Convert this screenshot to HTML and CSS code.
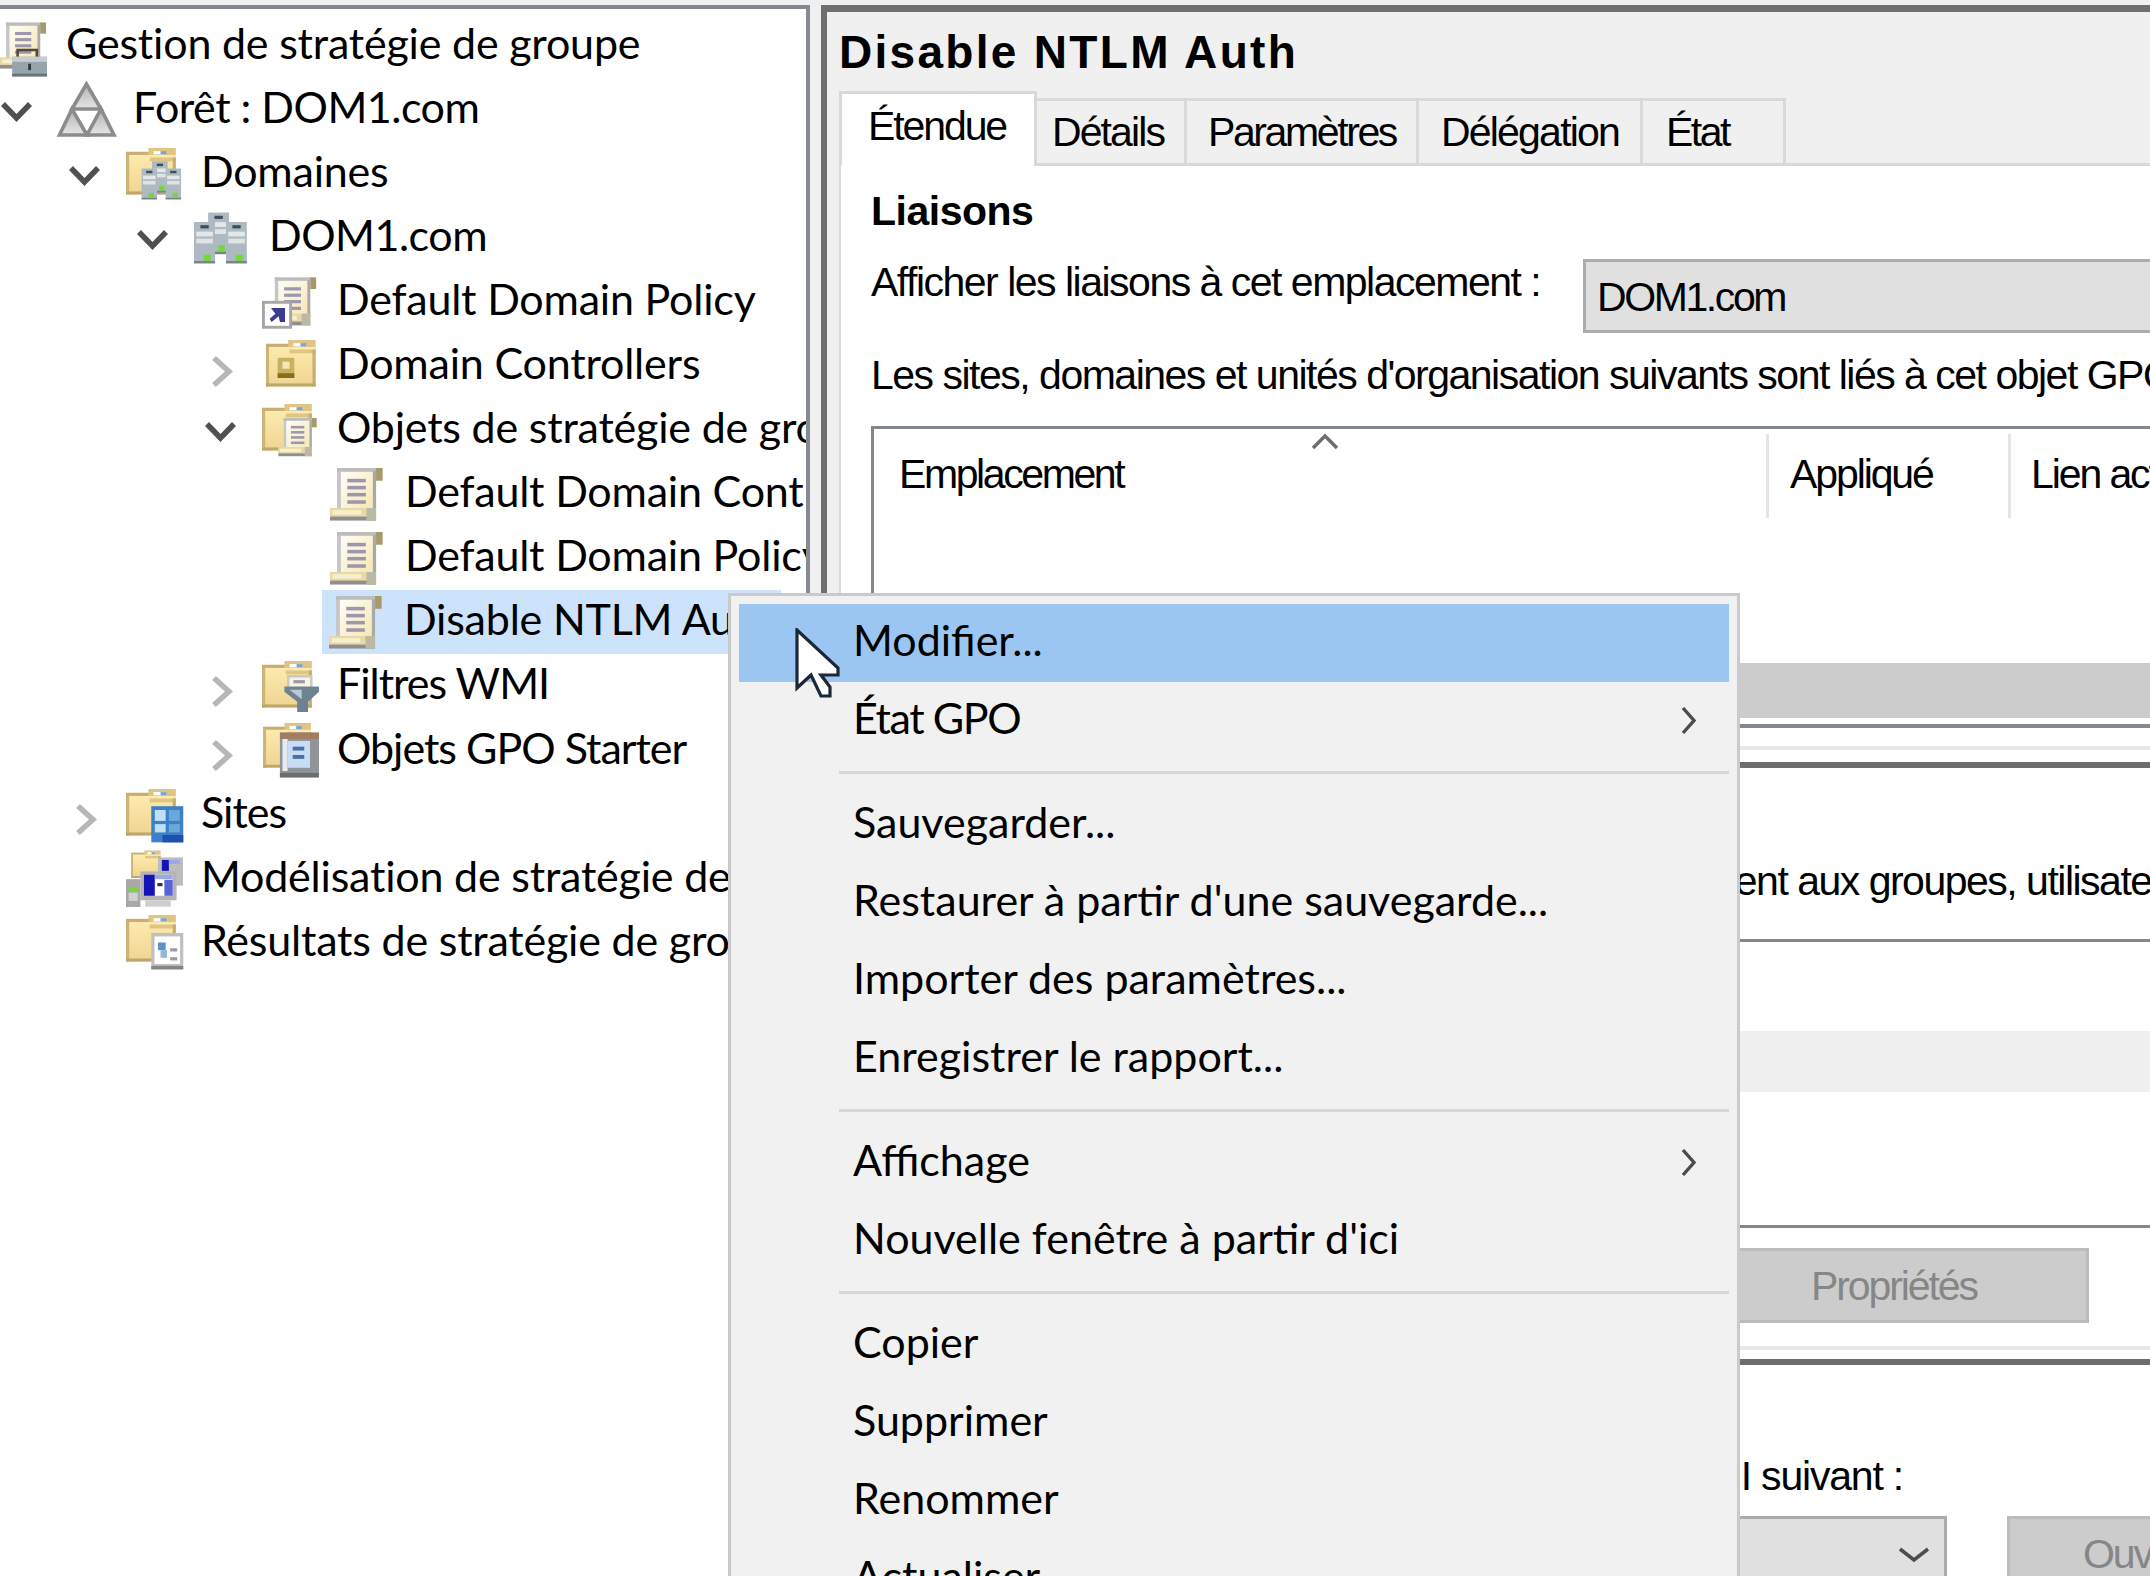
FILE: index.html
```html
<!DOCTYPE html>
<html lang="fr">
<head>
<meta charset="utf-8">
<title>Gestion de stratégie de groupe</title>
<link rel="stylesheet" href="styles.css">
</head>
<body>
<svg class="defs" width="0" height="0" aria-hidden="true">
  <defs>
    <linearGradient id="fold" x1="0" y1="0" x2="0" y2="1"><stop offset="0" stop-color="#fdeaae"/><stop offset="1" stop-color="#efd491"/></linearGradient>
    <linearGradient id="parch" x1="0" y1="0" x2="1" y2="1"><stop offset="0" stop-color="#ffffff"/><stop offset="1" stop-color="#f6e5ae"/></linearGradient>
    <linearGradient id="tri" x1="0" y1="0" x2="0" y2="1"><stop offset="0" stop-color="#b0b0b0"/><stop offset="1" stop-color="#e6e6e6"/></linearGradient>
    <symbol id="folder" viewBox="0 0 15.6 14.6">
      <rect x="0" y="1.2" width="8" height="2" fill="#c9ae6f"/>
      <rect x="7" y="0" width="8.6" height="4.2" fill="#dfc583"/>
      <rect x="0" y="2.2" width="15.6" height="12.4" fill="url(#fold)"/>
      <rect x="7.4" y="3" width="8.2" height="1.2" fill="#dfc583"/>
      <rect x="8.6" y="1" width="3.4" height="1" fill="#ffffff"/>
      <rect x="10.8" y="1" width="1.8" height="1" fill="#74a5df"/>
      <rect x="0" y="2.2" width="1" height="12.4" fill="#cdb478"/>
      <rect x="14.6" y="3" width="1" height="11.6" fill="#c6ad70"/>
      <rect x="0" y="13.6" width="15.6" height="1" fill="#bda76c"/>
    </symbol>
    <symbol id="scroll" viewBox="0 0 16.5 16.5">
      <rect x="2.2" y="0" width="12.2" height="14" fill="url(#parch)"/>
      <rect x="2.2" y="0" width="1.2" height="13" fill="#c6c6c6"/>
      <rect x="2.2" y="0" width="13" height="1.2" fill="#bdbdbd"/>
      <rect x="13.4" y="1" width="1" height="12.5" fill="#a9a9a9"/>
      <rect x="14.4" y="0" width="2.1" height="4" fill="#a69a6b"/>
      <rect x="5.4" y="3.4" width="5.8" height="1.1" fill="#9d97ad"/>
      <rect x="5.4" y="5.6" width="5.8" height="1.1" fill="#9d97ad"/>
      <rect x="5.4" y="7.8" width="5.8" height="1.1" fill="#9d97ad"/>
      <rect x="5.4" y="10.1" width="5.8" height="1.1" fill="#9d97ad"/>
      <rect x="0" y="12.5" width="14.4" height="3" fill="#e7d9a4"/>
      <rect x=".8" y="13.2" width="9" height="1.4" fill="#f6efd0"/>
      <rect x="0" y="15.2" width="14.4" height="1.3" fill="#8f8f8f"/>
      <rect x="11.4" y="12.5" width="3" height="4" fill="#b9b9a5"/>
    </symbol>
    <symbol id="tower" viewBox="0 0 6.6 13">
      <rect width="6.6" height="13" fill="#aeb9c1"/>
      <rect x="2" y="1" width="2.6" height="1" fill="#3b4e5b"/>
      <rect x=".7" y="3" width="5.2" height="1.5" fill="#e4e8eb"/>
      <rect x=".7" y="5.2" width="5.2" height="1.5" fill="#dfe4e7"/>
      <rect y="12.2" width="6.6" height=".8" fill="#78848d"/>
      <rect x="3" y="10.2" width="2.2" height="2" fill="#74d83c"/>
    </symbol>
    <symbol id="servers" viewBox="0 0 16.5 16.5">
      <use href="#tower" x="4.4" y="0" width="6.6" height="14"/>
      <use href="#tower" x="0" y="3.4" width="6.6" height="13.1"/>
      <use href="#tower" x="10" y="3.4" width="6.6" height="13.1"/>
    </symbol>
    <symbol id="chev-down" viewBox="0 0 33 22"><polyline points="3,3 16.5,17 30,3" fill="none" stroke="#505050" stroke-width="5.5"/></symbol>
    <symbol id="chev-right" viewBox="0 0 22 33"><polyline points="3,3 18,16.5 3,30" fill="none" stroke="#b6b6b6" stroke-width="5.5"/></symbol>
    <symbol id="sub" viewBox="0 0 16 29"><polyline points="2,2 13,14.5 2,27" fill="none" stroke="#4b4b4b" stroke-width="3.4"/></symbol>
  </defs>
</svg>

<div class="screen">
  <div class="tree">
    <div class="row root">
      <svg class="ico" viewBox="0 0 18 17"><use href="#scroll" x="0" y=".6" width="14.4" height="16"/><rect x="5.5" y="10" width="6" height="3" fill="none" stroke="#4f4a3a" stroke-width=".8"/><rect x="3.8" y="12.1" width="10.9" height="6.1" fill="#98a4ab"/><rect x="3.8" y="12.1" width="10.9" height="1.6" fill="#c6cdd1"/><rect x="3.8" y="17.4" width="10.9" height=".9" fill="#69747b"/><rect x="8.8" y="14.3" width=".9" height="2" fill="#2f3a40"/></svg>
      <span class="label">Gestion de stratégie de groupe</span>
    </div>
    <div class="row">
      <svg class="chev down"><use href="#chev-down" width="33" height="22"/></svg>
      <svg class="ico" viewBox="0 0 57.6 54.4"><g fill="url(#tri)" stroke="#8c8c8c" stroke-width="3.6"><polygon points="28.5,2 14,27 43,27"/><polygon points="14,27 1.5,53 29,53"/><polygon points="43,27 29,53 56,53"/></g></svg>
      <span class="label tight">Forêt : DOM1.com</span>
    </div>
    <div class="row d1">
      <svg class="chev down"><use href="#chev-down" width="33" height="22"/></svg>
      <svg class="ico" viewBox="0 0 18 17"><use href="#folder" y=".6" width="15.6" height="14.6"/><use href="#servers" x="4.4" y="4.4" width="13.2" height="12.4"/></svg>
      <span class="label">Domaines</span>
    </div>
    <div class="row d2">
      <svg class="chev down"><use href="#chev-down" width="33" height="22"/></svg>
      <svg class="ico" viewBox="0 0 18 17"><use href="#servers" y=".3" width="16.5" height="16.5"/></svg>
      <span class="label tight">DOM1.com</span>
    </div>
    <div class="row d3">
      <span class="chev"></span>
      <svg class="ico" viewBox="0 0 18 17"><use href="#scroll" x="2" y=".3" width="15" height="16.5"/><rect x="0" y="8.4" width="9.4" height="8.7" fill="#a6a6a6"/><rect x=".9" y="9.3" width="7.6" height="6.9" fill="#ffffff"/><polygon points="2.8,10.6 7.2,10.6 7.2,15 5.6,15 5.2,13.2 3,15 2.4,14 4.2,12.4" fill="#3b3b8f"/></svg>
      <span class="label">Default Domain Policy</span>
    </div>
    <div class="row d3">
      <svg class="chev right"><use href="#chev-right" width="22" height="33"/></svg>
      <svg class="ico" viewBox="0 0 18 17"><use href="#folder" x="1.2" y=".6" width="15.6" height="14.6"/><rect x="4.9" y="6.2" width="5.2" height="6.3" fill="#c8b25f"/><rect x="6.4" y="7.4" width="2.2" height="2.2" fill="#f2e7b5"/><rect x="4.9" y="11" width="5.2" height="1.5" fill="#8a6d1f"/></svg>
      <span class="label">Domain Controllers</span>
    </div>
    <div class="row d3">
      <svg class="chev down"><use href="#chev-down" width="33" height="22"/></svg>
      <svg class="ico" viewBox="0 0 18 17"><use href="#folder" y=".6" width="15.6" height="14.6"/><use href="#scroll" x="4.6" y="5" width="13" height="12"/></svg>
      <span class="label">Objets de stratégie de groupe</span>
    </div>
    <div class="row d4">
      <span class="chev"></span>
      <svg class="ico" viewBox="0 0 18 17"><use href="#scroll" y=".3" width="16.5" height="16.5"/></svg>
      <span class="label">Default Domain Controllers Policy</span>
    </div>
    <div class="row d4">
      <span class="chev"></span>
      <svg class="ico" viewBox="0 0 18 17"><use href="#scroll" y=".3" width="16.5" height="16.5"/></svg>
      <span class="label">Default Domain Policy</span>
    </div>
    <div class="row d4 has-selection">
      <span class="chev short"></span>
      <div class="selected">
        <svg class="ico" viewBox="0 0 18 17"><use href="#scroll" y=".3" width="16.5" height="16.5"/></svg>
        <span class="label">Disable NTLM Auth</span>
      </div>
    </div>
    <div class="row d3">
      <svg class="chev right"><use href="#chev-right" width="22" height="33"/></svg>
      <svg class="ico" viewBox="0 0 18 17"><use href="#folder" y=".6" width="15.6" height="14.6"/><rect x="7.8" y="5" width="8" height="4" fill="#c9c9c9"/><rect x="8.6" y="5.8" width="6.4" height="3" fill="#f8f4e4"/><rect x="9.8" y="6.6" width="3.6" height="1" fill="#9d97ad"/><polygon points="7,8.6 17.8,8.6 17.8,10.2 14.4,13.4 14.4,16.6 11,16.6 11,13.4 7,10.2" fill="#6e8391"/><polygon points="8.6,9.6 12.4,9.6 12.4,12.6" fill="#b9cbd8"/></svg>
      <span class="label tighter">Filtres WMI</span>
    </div>
    <div class="row d3">
      <svg class="chev right"><use href="#chev-right" width="22" height="33"/></svg>
      <svg class="ico" viewBox="0 0 18 17"><use href="#folder" y="0" width="15.6" height="14"/><rect x="5.6" y="3" width="12.2" height="14" fill="#8f9499"/><rect x="5.6" y="3" width="12.2" height="2" fill="#a37c62"/><rect x="6.4" y="5" width="1.6" height="10" fill="#e6ecf2"/><rect x="8" y="5.6" width="7" height="8.4" fill="#c8dcf5"/><rect x="9.6" y="7.4" width="3.6" height="1.2" fill="#4a6ea5"/><rect x="9.6" y="10" width="3.6" height="1.2" fill="#4a6ea5"/><rect x="5.6" y="15.6" width="12.2" height="1.4" fill="#6d6d6d"/></svg>
      <span class="label tighter">Objets GPO Starter</span>
    </div>
    <div class="row d1">
      <svg class="chev right"><use href="#chev-right" width="22" height="33"/></svg>
      <svg class="ico" viewBox="0 0 18 17"><use href="#folder" y=".6" width="15.6" height="14.6"/><rect x="7.9" y="6" width="10" height="11.3" fill="#3d7fc9"/><rect x="9" y="7.2" width="3.4" height="3.4" fill="#bfe0f2"/><rect x="13.4" y="7.2" width="3.4" height="3.4" fill="#6aa8d6"/><rect x="9" y="11.6" width="3.4" height="2.6" fill="#bfe0f2"/><rect x="13.4" y="11.6" width="3.4" height="2.6" fill="#6aa8d6"/><rect x="11.4" y="15" width="6.5" height="2.3" fill="#1f50b0"/></svg>
      <span class="label tighter">Sites</span>
    </div>
    <div class="row d1">
      <span class="chev"></span>
      <svg class="ico" viewBox="0 0 18 17"><use href="#folder" x="1" y="-.2" width="10.4" height="8.6"/><rect x="10" y="2" width="7.8" height="8.8" fill="#bdbdbd"/><rect x="11.2" y="2.8" width="2.2" height="3.4" fill="#1414b4"/><rect x="13.4" y="2.8" width="3.4" height="1.2" fill="#9aa6e8"/><rect x="4.5" y="6.4" width="11.3" height="9" fill="#b4b4b4"/><rect x="5.6" y="7.4" width="9" height="6.6" fill="#ffffff"/><rect x="5.6" y="7.4" width="3.4" height="6.6" fill="#1414b4"/><rect x="9" y="7.4" width="5.6" height="1.4" fill="#9aa6e8"/><rect x="12" y="9" width="2.6" height="5" fill="#5a62d8"/><rect x="9.8" y="10" width="1.6" height="1" fill="#333344"/><rect x="0" y="8.8" width="4.5" height="8.7" fill="#a8a8a8"/><rect x=".8" y="11.4" width="2.9" height="1.2" fill="#74d83c"/><rect x=".8" y="13" width="2.9" height="2.6" fill="#d0d0d0"/><rect x="6" y="15.4" width="8" height="2" fill="#cfcfcf"/></svg>
      <span class="label">Modélisation de stratégie de groupe</span>
    </div>
    <div class="row d1">
      <span class="chev"></span>
      <svg class="ico" viewBox="0 0 18 17"><use href="#folder" y="0" width="15.6" height="14.6"/><rect x="7.9" y="5.6" width="10" height="11.4" fill="#c0c0c0"/><rect x="8.9" y="6.7" width="8" height="8.6" fill="#ffffff"/><rect x="10" y="8.6" width="2.4" height="2.4" fill="#5d93c4"/><rect x="10.8" y="11" width="2" height="2.4" fill="#8fb8dc"/><rect x="13.8" y="10.4" width="2.2" height="1" fill="#9d97ad"/><rect x="13.8" y="13.2" width="2.2" height="1" fill="#9d97ad"/><rect x="7.9" y="15.9" width="10" height="1.1" fill="#858585"/></svg>
      <span class="label">Résultats de stratégie de groupe</span>
    </div>
  </div>

  <div class="panel">
    <div class="title">Disable NTLM Auth</div>
    <div class="tabs">
      <div class="tab active">Étendue</div>
      <div class="tab t-details">Détails</div>
      <div class="tab t-params">Paramètres</div>
      <div class="tab t-deleg">Délégation</div>
      <div class="tab t-etat">État</div>
      <div class="tab-rest"></div>
    </div>
    <div class="content">
      <div class="heading">Liaisons</div>
      <div class="show-row">
        <span class="show-label">Afficher les liaisons à cet emplacement :</span>
        <div class="combo top-combo">DOM1.com</div>
      </div>
      <div class="line links-intro">Les sites, domaines et unités d'organisation suivants sont liés à cet objet GPO :</div>
      <div class="list links">
        <div class="list-head">
          <div class="col col-loc">Emplacement<svg class="caret" viewBox="0 0 30 17"><polyline points="3,15 15,3 27,15" fill="none" stroke="#6e6e6e" stroke-width="3.5"/></svg></div>
          <div class="col col-app">Appliqué</div>
          <div class="col col-lien">Lien activé</div>
        </div>
        <div class="list-fill"></div>
        <div class="scrollbar"></div>
      </div>
      <div class="rule-light after-links"></div>
      <div class="rule-dark first-split"></div>
      <div class="line filter-label">uniquement aux groupes, utilisateurs et ordinateurs suivants :</div>
      <div class="list filter">
        <div class="band"></div>
      </div>
      <div class="btn props">Propriétés</div>
      <div class="rule-light after-props"></div>
      <div class="rule-dark second-split"></div>
      <div class="line wmi-label">Cet objet GPO est lié au filtre WMI suivant :</div>
      <div class="wmi-row">
        <div class="combo wmi-combo"><svg class="combo-chev" viewBox="0 0 32 20"><polyline points="2,4 16,15 30,4" fill="none" stroke="#4d4d4d" stroke-width="3.5"/></svg></div>
        <div class="btn open">Ouvrir</div>
      </div>
    </div>
  </div>

  <div class="menu">
    <div class="item hot">Modifier...</div>
    <div class="item"><span class="tight-item">État GPO</span><svg class="sub"><use href="#sub" width="16" height="29"/></svg></div>
    <div class="sep"></div>
    <div class="item">Sauvegarder...</div>
    <div class="item">Restaurer à partir d'une sauvegarde...</div>
    <div class="item">Importer des paramètres...</div>
    <div class="item">Enregistrer le rapport...</div>
    <div class="sep"></div>
    <div class="item">Affichage<svg class="sub"><use href="#sub" width="16" height="29"/></svg></div>
    <div class="item">Nouvelle fenêtre à partir d'ici</div>
    <div class="sep"></div>
    <div class="item">Copier</div>
    <div class="item">Supprimer</div>
    <div class="item">Renommer</div>
    <div class="item">Actualiser</div>
  </div>

  <svg class="cursor" viewBox="0 0 46 72"><polygon points="2,2 2,60 16,47 26,68 35,68 35,59 26,47 43,47 43,40" fill="#ffffff" stroke="#1c2836" stroke-width="3.2" stroke-linejoin="miter"/></svg>
</div>
</body>
</html>
```

FILE: styles.css
```css
* { box-sizing: border-box; }
html, body { margin: 0; padding: 0; }
body { background: #f0f0f0; color: #000; }
.defs { position: absolute; }

.screen {
  width: 2150px;
  height: 1576px;
  overflow: hidden;
  position: relative;
  display: flex;
  padding-top: 5px;
  background: #f0f0f0;
}

/* Left tree */
.tree {
  width: 810px;
  height: 1571px;
  flex: none;
  overflow: hidden;
  background: #fff;
  border-top: 4px solid #84888f;
  border-right: 4px solid #858a92;
  padding-top: 4px;
  font-family: Lato, "Noto Sans", sans-serif;
  font-size: 43px;
  letter-spacing: -.2px;
}
.row { display: flex; align-items: center; height: 64.1px; white-space: nowrap; }
.d1 { padding-left: 68px; }
.d2 { padding-left: 136px; }
.d3 { padding-left: 204px; }
.d4 { padding-left: 272px; }
.chev { flex: none; width: 58px; height: 33px; }
.chev.down { height: 22px; margin-top: 5px; overflow: visible; }
.chev.right { margin-top: 11px; overflow: visible; transform: translateX(7px); }
.chev.short { width: 50px; }
.ico { flex: none; width: 57.6px; height: 54.4px; margin-right: 17.4px; overflow: visible; }
.root .ico { margin-right: 8.4px; }
.label { padding-bottom: 5px; line-height: 60px; }
.tight { letter-spacing: -.5px; }
.tighter { letter-spacing: -1px; }
.selected {
  display: flex;
  align-items: center;
  flex: none;
  width: 459px;
  height: 64px;
  padding-left: 7px;
  background: #cde3fb;
}

/* Right details panel */
.panel {
  flex: none;
  width: 1329px;
  margin-left: 11px;
  background: #f0f0f0;
  border-top: 7px solid #6f6f6f;
  border-left: 6px solid #6f6f6f;
  font-family: "Liberation Sans", Arial, sans-serif;
  font-size: 41px;
  white-space: nowrap;
}
.title {
  height: 79px;
  padding-left: 12px;
  line-height: 80px;
  font-size: 46px;
  font-weight: 700;
  letter-spacing: 2.3px;
}
.tabs { display: flex; align-items: flex-end; height: 75px; margin-left: 12px; }
.tab {
  flex: none;
  height: 68px;
  line-height: 62px;
  border-top: 3px solid #d9d9d9;
  border-right: 3px solid #d9d9d9;
  border-bottom: 3px solid #d9d9d9;
}
.tab.active {
  width: 198px;
  height: 75px;
  padding-left: 26px;
  line-height: 64px;
  letter-spacing: -2.1px;
  background: #fff;
  border-left: 3px solid #d9d9d9;
  border-bottom: 0;
}
.t-details { width: 150px; padding-left: 15px; letter-spacing: -1.9px; }
.t-params { width: 232px; padding-left: 21px; letter-spacing: -2.4px; }
.t-deleg { width: 224px; padding-left: 22px; letter-spacing: -1.8px; }
.t-etat { width: 143px; padding-left: 23px; letter-spacing: -2.5px; }
.tab-rest { flex: 1; height: 3px; background: #d9d9d9; }

.content {
  margin-left: 12px;
  height: 1500px;
  padding-left: 30px;
  background: #fff;
  border-left: 2px solid #d9d9d9;
}
.line { letter-spacing: -1.5px; }
.heading { height: 93px; line-height: 90px; font-weight: 700; letter-spacing: -.5px; }
.show-row { display: flex; height: 74px; }
.show-label { flex: none; width: 712px; line-height: 46px; letter-spacing: -1.5px; }
.combo { background: #e0e0e0; border: 3px solid #acacac; }
.top-combo {
  width: 700px;
  flex: none;
  height: 74px;
  padding-left: 11px;
  line-height: 70px;
  letter-spacing: -2.4px;
}
.links-intro { height: 93px; line-height: 84px; }

.list { border: 3px solid #828790; border-right: 0; }
.links { display: flex; flex-direction: column; height: 302px; border-bottom-width: 4px; }
.list-head { display: flex; flex: none; height: 84px; margin-top: 5px; letter-spacing: -2.1px; line-height: 80px; }
.col { flex: none; position: relative; }
.col-loc { width: 895px; padding-left: 25px; letter-spacing: -2.4px; border-right: 3px solid #e5e5e5; }
.col-app { width: 242px; padding-left: 21px; border-right: 3px solid #e5e5e5; }
.col-lien { padding-left: 20px; }
.caret { position: absolute; left: 436px; top: -1px; width: 30px; height: 17px; }
.list-fill { flex: 1; }
.scrollbar { flex: none; height: 55px; margin-bottom: 6px; background: #ccc; }

.rule-light { height: 4px; background: #e8e8e8; }
.rule-dark { height: 6px; background: #6d6d6d; }
.after-links { margin-top: 18px; }
.first-split { margin-top: 12px; }
.filter-label { height: 171px; padding-top: 80px; padding-left: 717px; line-height: 66px; }
.filter { height: 289px; padding-top: 89px; }
.band { height: 61px; background: #efefef; }
.btn {
  background: #ccc;
  border: 3px solid #bcbcbc;
  color: #868686;
  letter-spacing: -2.1px;
}
.props {
  width: 390px;
  height: 75px;
  margin-top: 20px;
  margin-left: 828px;
  padding-left: 109px;
  line-height: 70px;
}
.after-props { margin-top: 23px; }
.second-split { margin-top: 9px; }
.wmi-label { width: 1032px; height: 151px; padding-top: 80px; line-height: 62px; text-align: right; letter-spacing: -1.2px; }
.wmi-row { display: flex; gap: 60px; height: 90px; }
.wmi-combo { flex: none; width: 1076px; display: flex; justify-content: flex-end; align-items: flex-start; padding-right: 14px; padding-top: 26px; }
.combo-chev { width: 32px; height: 20px; }
.open { flex: none; width: 300px; padding-left: 73px; line-height: 70px; }

/* Context menu */
.menu {
  position: absolute;
  left: 728px;
  top: 593px;
  width: 1012px;
  padding: 8px;
  background: #f1f1f1;
  border: 3px solid #cacaca;
  font-family: Lato, "Noto Sans", sans-serif;
  font-size: 43px;
  letter-spacing: 0;
  white-space: nowrap;
}
.item {
  display: flex;
  align-items: center;
  justify-content: space-between;
  height: 78px;
  padding: 0 32px 7px 114px;
  line-height: 60px;
}
.item.hot { background: #9bc6f1; }
.tight-item { letter-spacing: -1.4px; }
.sub { width: 16px; height: 29px; margin-top: 5px; }
.sep { height: 3px; margin: 11px 0 12px 100px; background: #d7d7d7; }
.cursor { position: absolute; left: 795px; top: 628px; width: 46px; height: 72px; }
```
